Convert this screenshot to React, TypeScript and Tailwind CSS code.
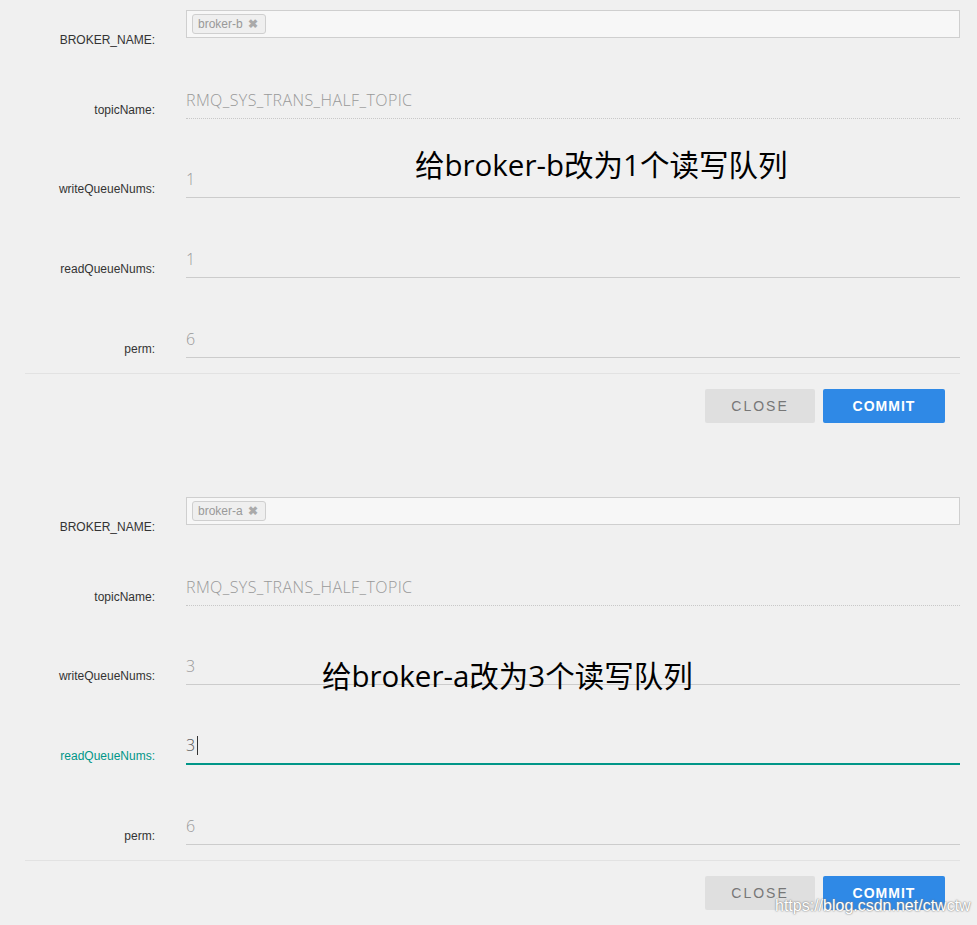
import React from "react";

const labelCls =
  "w-[155px] shrink-0 text-right text-[12px] leading-[14px] text-[#333]";
const valueFont = { fontFamily: '"Open Sans", "Noto Sans", sans-serif' };

function BrokerRow({ name }: { name: string }) {
  return (
    <div className="flex items-end">
      <div className={`${labelCls} -mb-[1px]`}>BROKER_NAME:</div>
      <div className="ml-[31px] mr-[17px] mb-[8px] flex h-[28px] flex-1 items-center border border-[#cfcfcf] bg-[#f7f7f7] px-[5px]">
        <div className="flex h-[20px] w-[74px] items-center rounded-[3px] border border-[#cfcfcf] bg-[#efefef] pl-[5px] text-[12px] text-[#999]">
          <span>{name}</span>
          <span className="ml-[5px] text-[12px] font-bold text-[#aaa]">✖</span>
        </div>
      </div>
    </div>
  );
}

function FieldRow({
  label,
  value,
  h,
  dotted,
  focused,
  dark,
}: {
  label: string;
  value: string;
  h: string;
  dotted?: boolean;
  focused?: boolean;
  dark?: boolean;
}) {
  return (
    <div className={`flex items-end ${h}`}>
      <div
        className={`${labelCls} mb-[2px] ${focused ? "text-[#009688]" : ""}`}
      >
        {label}
      </div>
      <div
        className={`ml-[31px] mr-[17px] flex flex-1 items-center ${
          focused
            ? "h-[38px] border-b-2 border-[#009688]"
            : dotted
            ? "h-[38px] border-b border-dotted border-[#c8c8c8]"
            : "h-[38px] border-b border-[#cccccc]"
        }`}
      >
        <span
          className={`text-[16px] font-light tracking-[0.4px] ${
            dark ? "text-[#555]" : "text-[#999]"
          }`}
          style={valueFont}
        >
          {value}
        </span>
        {focused && <span className="ml-[1px] h-[19px] w-[1px] bg-[#333]" />}
      </div>
    </div>
  );
}

function Section({
  broker,
  q,
  focusRead,
}: {
  broker: string;
  q: string;
  focusRead?: boolean;
}) {
  return (
    <div className="flex flex-col">
      <BrokerRow name={broker} />
      <FieldRow
        label="topicName:"
        value="RMQ_SYS_TRANS_HALF_TOPIC"
        h="h-[73px]"
        dotted
      />
      <FieldRow label="writeQueueNums:" value={q} h="h-[79px]" />
      <FieldRow
        label="readQueueNums:"
        value={q}
        h="h-[80px]"
        focused={focusRead}
        dark={focusRead}
      />
      <FieldRow label="perm:" value="6" h="h-[80px]" />
      <div className="ml-[25px] mr-[17px] mt-[15px] h-[1px] bg-[#e2e2e2]" />
      <div className="mt-[15px] mr-[32px] flex justify-end gap-[8px]">
        <button className="h-[34px] w-[110px] rounded-[2px] bg-[#dfdfdf] text-[14px] tracking-[2px] text-[#777]">
          CLOSE
        </button>
        <button className="h-[34px] w-[122px] rounded-[2px] bg-[#2f89e6] text-[14px] font-bold tracking-[1px] text-white">
          COMMIT
        </button>
      </div>
    </div>
  );
}

export default function App() {
  return (
    <div
      className="relative h-[925px] w-[977px] overflow-hidden bg-[#f0f0f0] pt-[10px]"
      style={{ fontFamily: '"Liberation Sans", Arial, sans-serif' }}
    >
      <Section broker="broker-b" q="1" />
      <div className="h-[74px]" />
      <Section broker="broker-a" q="3" focusRead />

      <div
        className="absolute left-[415px] top-[146px] text-[29.5px] leading-[38px] text-black"
        style={{
          fontFamily: '"Open Sans", "Noto Sans CJK SC", sans-serif',
        }}
      >
        给broker-b改为1个读写队列
      </div>
      <div
        className="absolute left-[322px] top-[657px] text-[29.5px] leading-[38px] text-black"
        style={{
          fontFamily: '"Open Sans", "Noto Sans CJK SC", sans-serif',
        }}
      >
        给broker-a改为3个读写队列
      </div>
      <div
        className="absolute left-[775px] top-[896px] text-[16px] leading-[20px] text-white"
        style={{
          textShadow: "0 0 2px #777, 0 0 1px #999",
          fontFamily: '"Liberation Sans", Arial, sans-serif',
        }}
      >
        https://blog.csdn.net/ctwctw
      </div>
    </div>
  );
}
